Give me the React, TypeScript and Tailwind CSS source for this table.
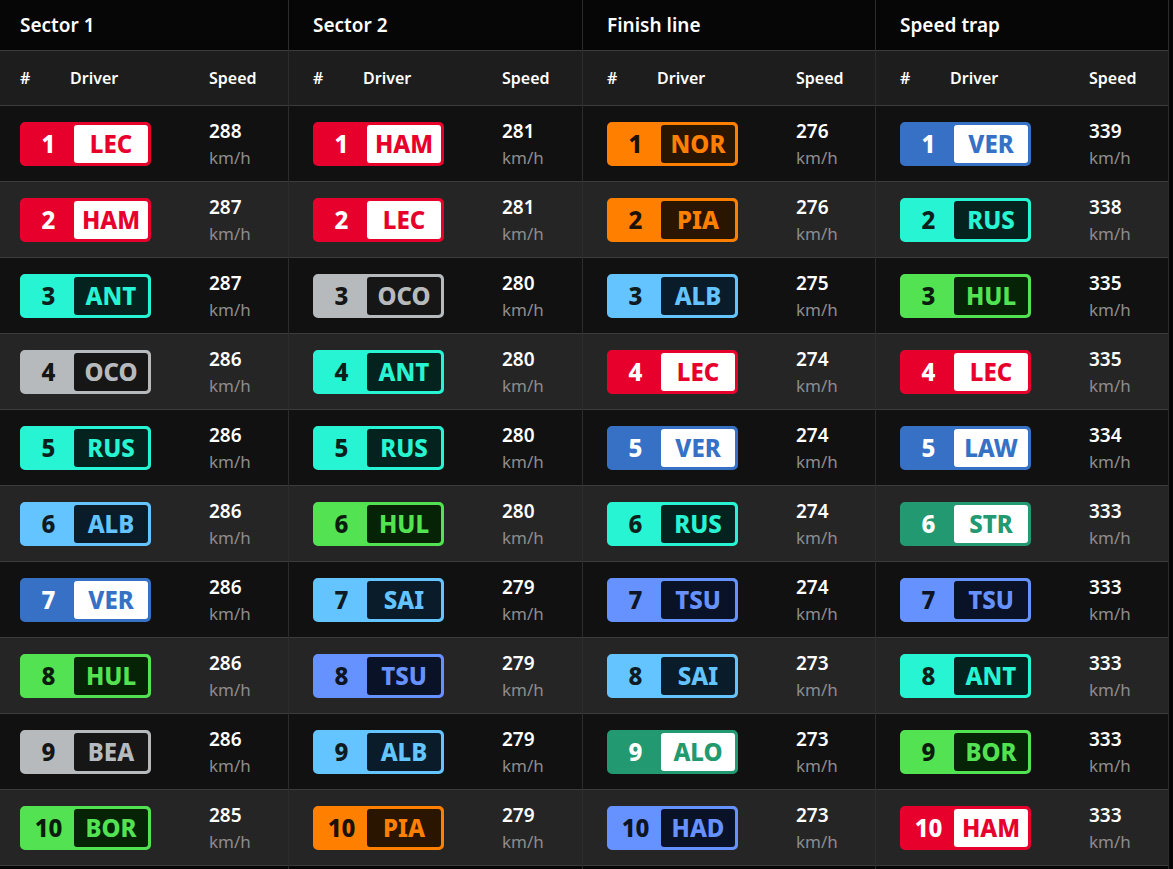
type Team = { color: string; box: string; text: string; num: string };

const teams: Record<string, Team> = {
  ferrari: { color: '#e8002d', box: '#ffffff', text: '#e8002d', num: '#ffffff' },
  redbull: { color: '#3671c6', box: '#ffffff', text: '#3671c6', num: '#ffffff' },
  aston: { color: '#229971', box: '#ffffff', text: '#229971', num: '#ffffff' },
  mclaren: { color: '#ff8000', box: '#2a1500', text: '#ff8000', num: '#1a1208' },
  mercedes: { color: '#27f4d2', box: '#04231e', text: '#27f4d2', num: '#0d1f1b' },
  gray: { color: '#b6babd', box: '#161616', text: '#b6babd', num: '#161616' },
  williams: { color: '#64c4ff', box: '#0a1c2a', text: '#64c4ff', num: '#0f1a22' },
  rb: { color: '#6692ff', box: '#0a1228', text: '#6692ff', num: '#0d1424' },
  sauber: { color: '#52e252', box: '#062306', text: '#52e252', num: '#0c1c0c' },
};

type Entry = [string, string, number];

const columns: { title: string; rows: Entry[] }[] = [
  {
    title: 'Sector 1',
    rows: [
      ['LEC', 'ferrari', 288],
      ['HAM', 'ferrari', 287],
      ['ANT', 'mercedes', 287],
      ['OCO', 'gray', 286],
      ['RUS', 'mercedes', 286],
      ['ALB', 'williams', 286],
      ['VER', 'redbull', 286],
      ['HUL', 'sauber', 286],
      ['BEA', 'gray', 286],
      ['BOR', 'sauber', 285],
    ],
  },
  {
    title: 'Sector 2',
    rows: [
      ['HAM', 'ferrari', 281],
      ['LEC', 'ferrari', 281],
      ['OCO', 'gray', 280],
      ['ANT', 'mercedes', 280],
      ['RUS', 'mercedes', 280],
      ['HUL', 'sauber', 280],
      ['SAI', 'williams', 279],
      ['TSU', 'rb', 279],
      ['ALB', 'williams', 279],
      ['PIA', 'mclaren', 279],
    ],
  },
  {
    title: 'Finish line',
    rows: [
      ['NOR', 'mclaren', 276],
      ['PIA', 'mclaren', 276],
      ['ALB', 'williams', 275],
      ['LEC', 'ferrari', 274],
      ['VER', 'redbull', 274],
      ['RUS', 'mercedes', 274],
      ['TSU', 'rb', 274],
      ['SAI', 'williams', 273],
      ['ALO', 'aston', 273],
      ['HAD', 'rb', 273],
    ],
  },
  {
    title: 'Speed trap',
    rows: [
      ['VER', 'redbull', 339],
      ['RUS', 'mercedes', 338],
      ['HUL', 'sauber', 335],
      ['LEC', 'ferrari', 335],
      ['LAW', 'redbull', 334],
      ['STR', 'aston', 333],
      ['TSU', 'rb', 333],
      ['ANT', 'mercedes', 333],
      ['BOR', 'sauber', 333],
      ['HAM', 'ferrari', 333],
    ],
  },
];

// row widths exclude the column's right border
const widths = ['w-[288px] pl-5', 'w-[293px] pl-6', 'w-[292px] pl-6', 'w-[292px] pl-6'];

function Badge({ pos, code, team }: { pos: number; code: string; team: Team }) {
  return (
    <div
      className="flex h-[44px] w-[131px] rounded-[5px] border-[3px]"
      style={{ borderColor: team.color, backgroundColor: team.color }}
    >
      <span
        className="flex w-[51px] items-center justify-center text-[24px] font-extrabold leading-none"
        style={{ color: team.num }}
      >
        {pos}
      </span>
      <span
        className="flex flex-1 items-center justify-center rounded-[3px] text-[24px] font-extrabold leading-none"
        style={{ backgroundColor: team.box, color: team.text }}
      >
        {code}
      </span>
    </div>
  );
}

export default function App() {
  return (
    <div className="flex min-h-screen bg-[#060606] font-['Noto_Sans',sans-serif] text-white">
      {columns.map((col, ci) => (
        <div key={col.title} className="flex flex-col border-r border-[#2c2c2c]">
          <div className={`flex h-[51px] items-center border-b border-[#3c3c3c] bg-[#060606] ${widths[ci]}`}>
            <span className="text-[19px] font-semibold">{col.title}</span>
          </div>
          <div className={`flex h-[55px] items-center border-b border-[#3c3c3c] bg-[#1d1d1d] text-[16px] font-semibold ${widths[ci]}`}>
            <span className="w-[50px]">#</span>
            <span className="w-[139px]">Driver</span>
            <span>Speed</span>
          </div>
          {col.rows.map(([code, teamKey, speed], i) => (
            <div
              key={code + i}
              className={`flex h-[76px] items-center border-b border-[#3c3c3c] ${widths[ci]} ${
                i % 2 === 0 ? 'bg-[#111111]' : 'bg-[#252525]'
              }`}
            >
              <Badge pos={i + 1} code={code} team={teams[teamKey]} />
              <div className="ml-[58px] flex flex-col pt-[3px]">
                <span className="text-[19px] font-semibold leading-[24px]">{speed}</span>
                <span className="text-[17px] leading-[29px] text-[#8c8c8c]">km/h</span>
              </div>
            </div>
          ))}
        </div>
      ))}
    </div>
  );
}
